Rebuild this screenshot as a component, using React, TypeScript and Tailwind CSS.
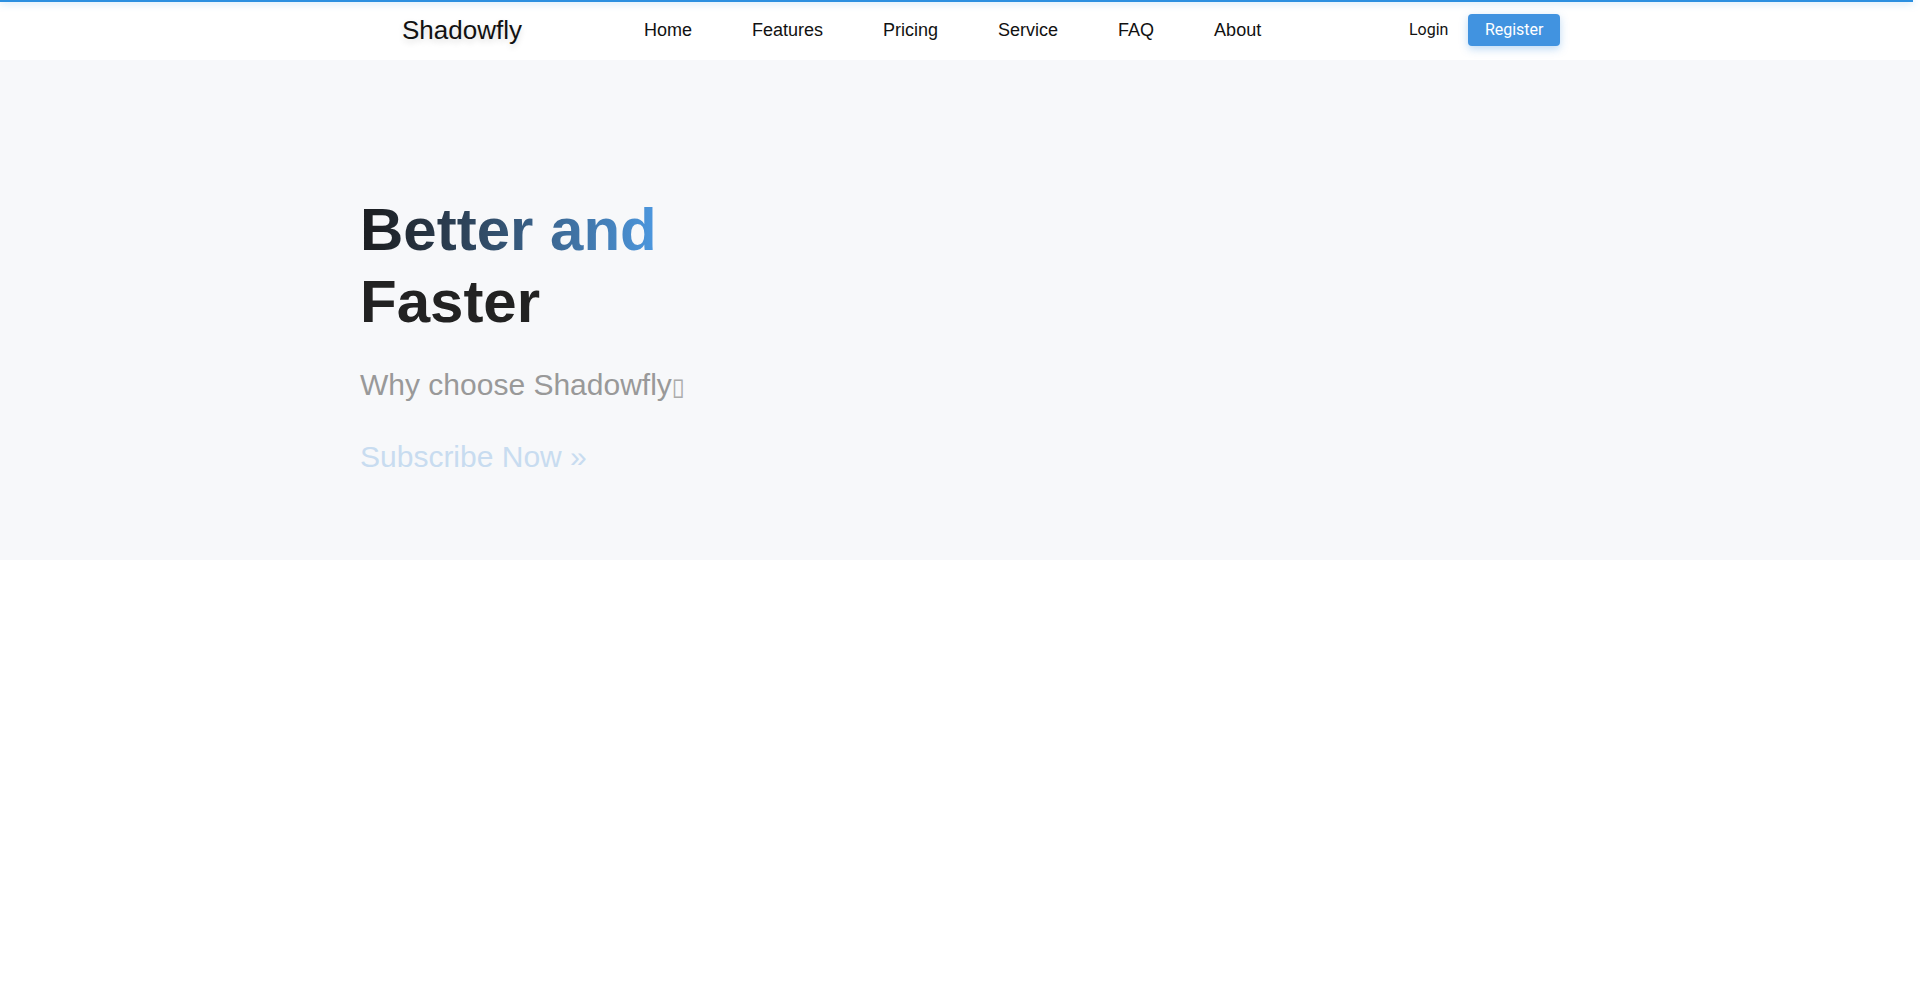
import { useState } from "react";

const NAV_LINKS = ["Home", "Features", "Pricing", "Service", "FAQ", "About"];

export default function App() {
  const [active, setActive] = useState("Home");

  return (
    <div className="min-h-screen bg-white font-['Liberation_Sans',Arial,sans-serif] text-[#111]">
      {/* page loading bar */}
      <div className="absolute left-0 top-0 z-20 h-[2px] w-[1913px] bg-[#2b8fe0] shadow-[0_0_8px_rgba(43,143,224,0.6)]" />

      <header className="h-[60px] bg-white">
        <div className="mx-auto flex h-full w-[1200px] items-center">
          <a
            href="#"
            className="ml-[42px] text-[26px] leading-none text-[#111] [text-shadow:0_3px_6px_rgba(0,0,0,0.15)]"
          >
            Shadowfly
          </a>
          <nav className="ml-[92px] flex">
            {NAV_LINKS.map((link) => (
              <a
                key={link}
                href="#"
                onClick={() => setActive(link)}
                className={`px-[30px] text-[18px] leading-none ${
                  active === link ? "text-[#111]" : "text-[#111]"
                }`}
              >
                {link}
              </a>
            ))}
          </nav>
          <div className="ml-auto flex items-center gap-5 font-['Roboto',sans-serif]">
            <button className="text-[16px] text-[#111]">Login</button>
            <button className="h-[32px] rounded bg-[#4193e0] px-[16.5px] text-[16px] text-white shadow-[0_3px_8px_rgba(65,147,224,0.35)]">
              Register
            </button>
          </div>
        </div>
      </header>

      <section className="bg-[#f7f8fa] pb-[81px] pt-[134px]">
        <div className="mx-auto w-[1200px]">
          <h1 className="text-[60px] font-bold leading-[72px] text-[#222]">
            <span className="bg-linear-to-r from-[#1d2024] from-5% to-[#4c98e0] bg-clip-text text-transparent">
              Better and
            </span>
            <br />
            Faster
          </h1>
          <p className="mt-6 text-[30px] leading-[45px] text-[#999]">
            Why choose Shadowfly<span className="font-['DejaVu_Sans',sans-serif] text-[24px] text-[#aaa]">▯</span>
          </p>
          <a
            href="#"
            className="mt-[24px] block text-[30px] leading-[45px] text-[#c8dcf0]"
          >
            Subscribe Now »
          </a>
        </div>
      </section>
    </div>
  );
}
